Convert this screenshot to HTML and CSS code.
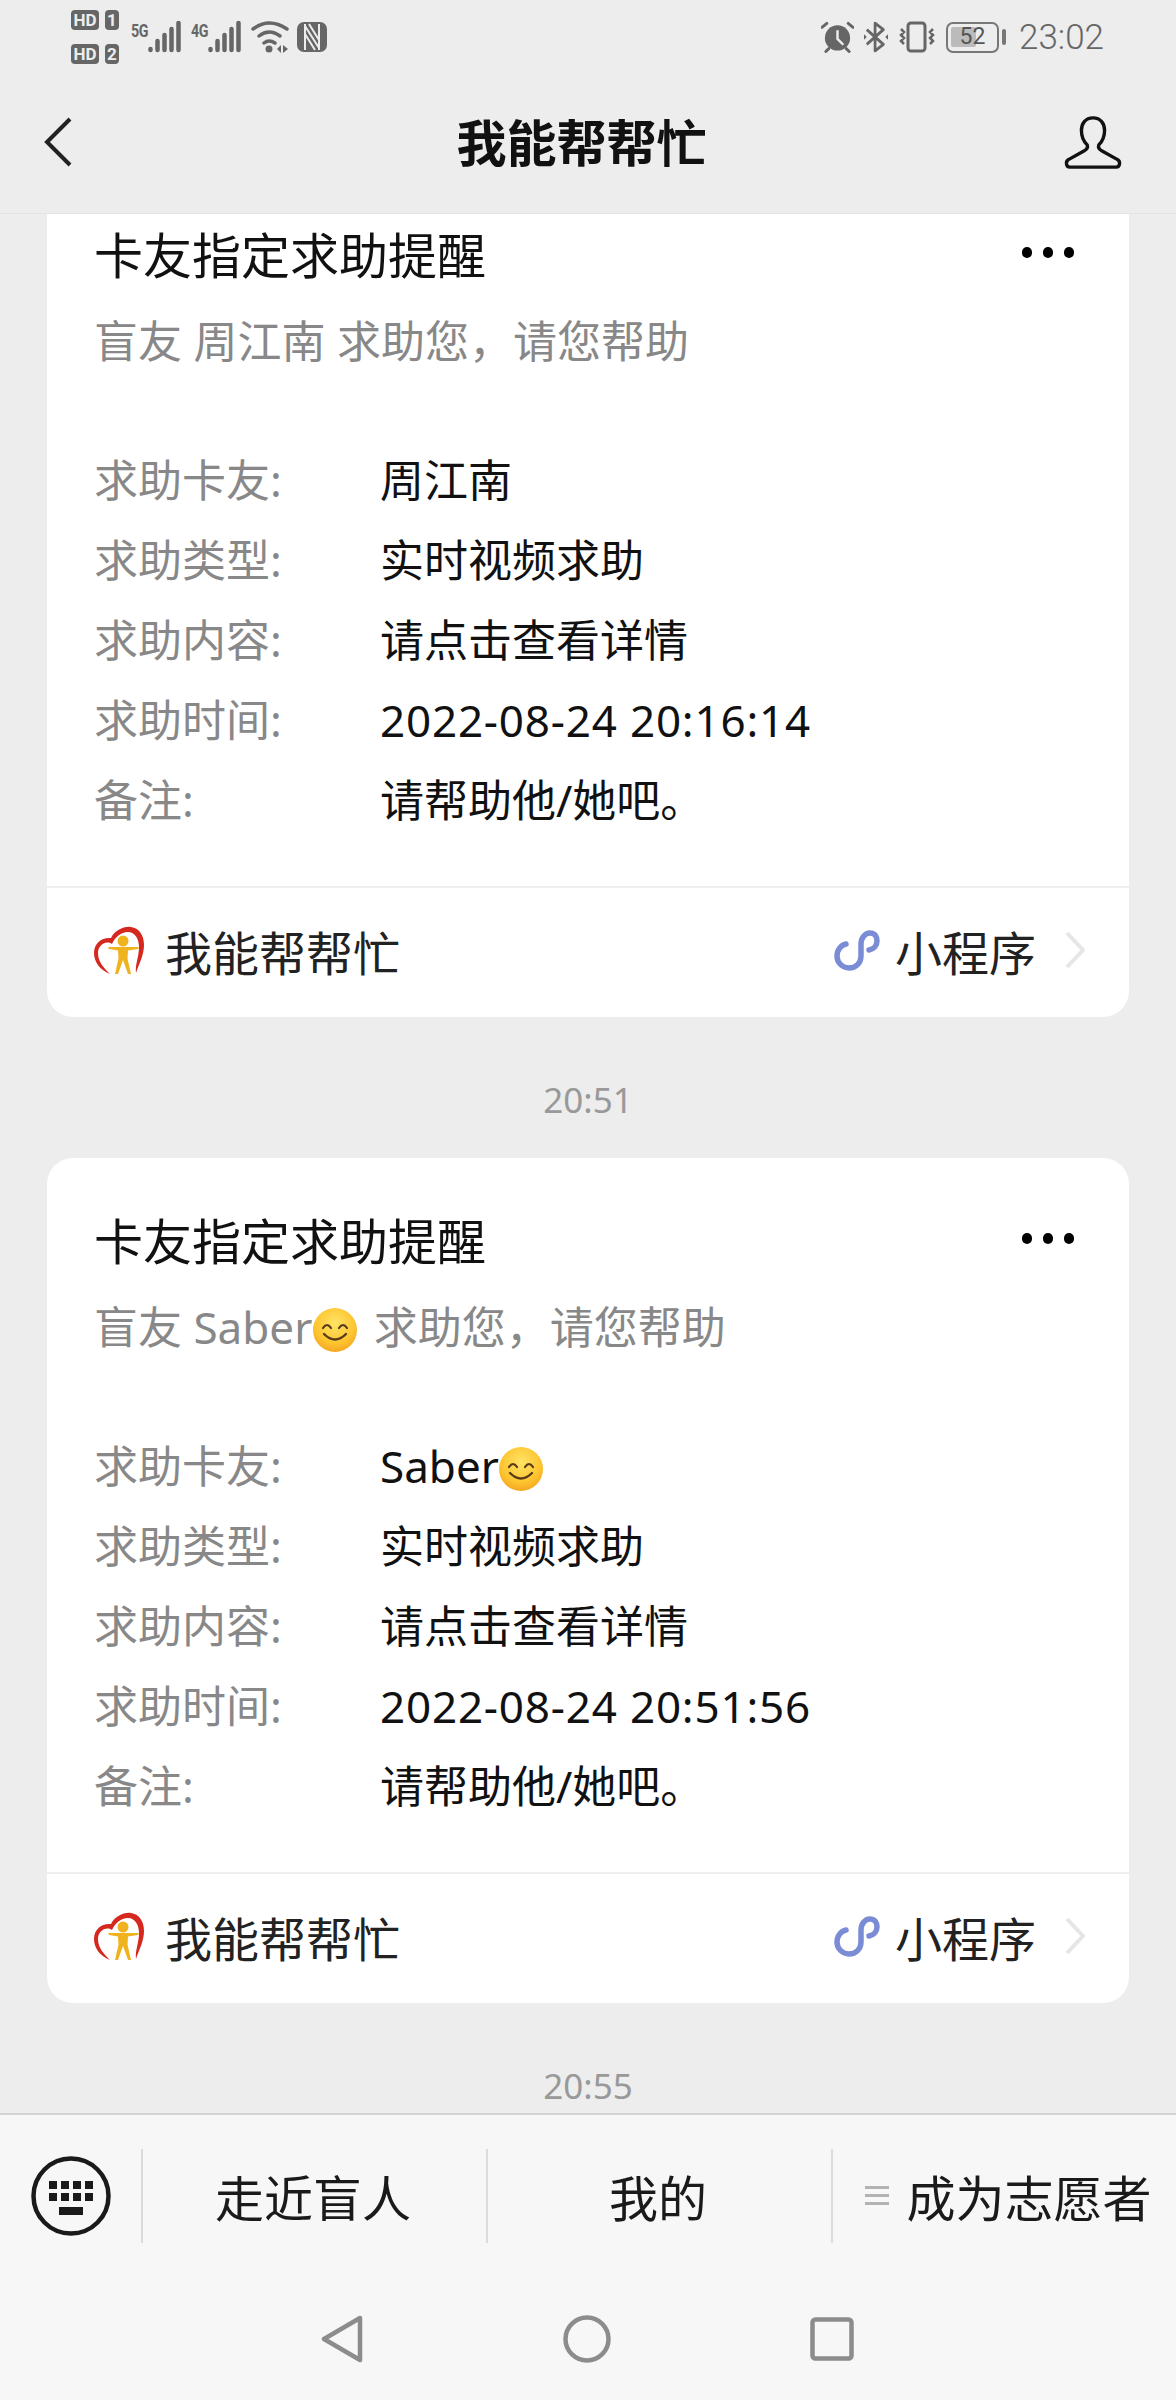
FILE: index.html
```html
<!DOCTYPE html>
<html lang="en">

<head>
    <meta charset="UTF-8">
    <meta name="viewport" content="width=device-width, initial-scale=1.0">
    <title>我能帮帮忙</title>
    <link rel="stylesheet" href="styles.css">
</head>

<body>

    <svg class="defs" width="0" height="0">
        <defs>
            <radialGradient id="emojiFace" cx="50%" cy="35%" r="70%">
                <stop offset="0" stop-color="#ffe466"/>
                <stop offset="0.65" stop-color="#fdc42f"/>
                <stop offset="1" stop-color="#f4a020"/>
            </radialGradient>
            <symbol id="smile" viewBox="0 0 44 46">
                <circle cx="22" cy="23" r="22" fill="url(#emojiFace)"/>
                <path d="M10 21q4-6 8 0M26 21q4-6 8 0" fill="none" stroke="#5b3a1a" stroke-width="2.200" stroke-linecap="round"/>
                <path d="M11 27q11 11 22 0" fill="none" stroke="#5b3a1a" stroke-width="2.400" stroke-linecap="round"/>
            </symbol>
            <symbol id="logo" viewBox="0 0 50 48">
                <path d="M16 48C6 44 0 36 0 27 0 17 8 11 17 12 21 4 30 0 37 1c8 1 13 8 13 18 0 10-5 19-8 28-1-9 3-16 3-26 0-8-4-15-11-15-7 0-13 5-16 12C12 14 4 19 4 27c0 9 6 15 12 21z" fill="#d5281f"/>
                <circle cx="29" cy="15" r="5.500" fill="#efb320"/>
                <path d="M14 21h31l-1 2-10 1.500-.5 8L37 48h-3l-5-14-5 14h-3l3.500-15.500-.5-8L15 23z" fill="#efb320"/>
            </symbol>
            <symbol id="mini" viewBox="0 0 46 42">
                <path d="M12 15c-5 1-9 6-9 12 0 7 6 12 12 12 7 0 12-5 12-12V15c0-6 4-11 9-11s7 4 7 8c0 4-3 8-8 9" fill="none" stroke="#7b8cd6" stroke-width="5.500" stroke-linecap="round"/>
            </symbol>
            <symbol id="bars" viewBox="0 0 34 32">
                <path d="M2.500 28v1M9.500 20v9M16.500 14v15M23.500 8v21M30.500 2v27" stroke="#666" stroke-width="4.500" stroke-linecap="round" fill="none"/>
            </symbol>
        </defs>
    </svg>

    <div class="page">

        <div class="top">
            <div class="status">
                <div class="status-left">
                    <div class="sims">
                        <div class="sim"><span class="hd">HD</span><span class="slot">1</span></div>
                        <div class="sim"><span class="hd">HD</span><span class="slot">2</span></div>
                    </div>
                    <div class="net"><span class="net-label">5G</span>
                        <svg width="34" height="32"><use href="#bars"/></svg>
                    </div>
                    <div class="net"><span class="net-label">4G</span>
                        <svg width="34" height="32"><use href="#bars"/></svg>
                    </div>
                    <svg class="wifi" width="38" height="32" viewBox="0 0 38 32">
                        <path d="M2 8Q18-4 36 8M8 15Q18 7 29 15M13 22q5-4 11 0" fill="none" stroke="#666" stroke-width="3.500" stroke-linecap="round"/>
                        <circle cx="18" cy="28" r="3.500" fill="#666"/>
                        <path d="M30 24v8l-4-4zM32 24v8l5-4z" fill="#666"/>
                    </svg>
                    <svg class="nfc" width="30" height="30" viewBox="0 0 30 30">
                        <path d="M7 0h16a7 7 0 0 1 7 7v16a7 7 0 0 1-7 7H7a7 7 0 0 1-7-7V7a7 7 0 0 1 7-7z" fill="#666"/>
                        <path d="M8 2v26M22 2v26M8 4l14 22M12 2l10 16M18 28L8 12" stroke="#ededed" stroke-width="2" fill="none"/>
                    </svg>
                </div>
                <div class="status-right">
                    <svg width="33" height="32" viewBox="0 0 34 32">
                        <circle cx="17" cy="17" r="13" fill="#666"/>
                        <path d="M17 9v9l6 6" stroke="#ededed" stroke-width="2.500" fill="none"/>
                        <path d="M1 6l5-4M33 6l-5-4M5 31l3-3M29 31l-3-3" stroke="#666" stroke-width="3" stroke-linecap="round"/>
                    </svg>
                    <svg width="24" height="34" viewBox="0 0 26 34">
                        <path d="M3 9l18 16-9 7V2l9 7L3 25" fill="none" stroke="#666" stroke-width="3" stroke-linejoin="round"/>
                        <path d="M0 14v6l3-3zM26 14v6l-3-3z" fill="#666"/>
                    </svg>
                    <svg width="38" height="32" viewBox="0 0 38 32">
                        <rect x="10" y="2" width="17" height="28" rx="3" fill="none" stroke="#666" stroke-width="3"/>
                        <path d="M3 8l3 3-3 3 3 3-3 3 3 3M35 8l-3 3 3 3-3 3 3 3-3 3" fill="none" stroke="#666" stroke-width="2.500"/>
                    </svg>
                    <div class="battery">
                        <div class="battery-box">
                            <div class="battery-fill"></div>
                            <span class="battery-num">52</span>
                        </div>
                        <div class="battery-tip"></div>
                    </div>
                    <span class="clock">23:02</span>
                </div>
            </div>
            <div class="nav">
                <svg class="nav-back" width="32" height="52" viewBox="0 0 32 52"><path d="M28 3L5 26l23 23" fill="none" stroke="#222" stroke-width="4"/></svg>
                <div class="nav-title">我能帮帮忙</div>
                <svg class="nav-user" width="58" height="54" viewBox="0 0 60 56"><path d="M30 3c-8 0-12 6-12 13 0 6 2 11 6 15 1 3-1 5-3 6L5 46c-4 2-3 8 1 8h48c4 0 5-6 1-8l-16-9c-2-1-4-3-3-6 4-4 6-9 6-15 0-7-4-13-12-13z" fill="none" stroke="#111" stroke-width="3.500" stroke-linejoin="round"/></svg>
            </div>
        </div>

        <div class="chat">
            <div class="card card-cut">
                <div class="card-head">
                    <div class="card-title">卡友指定求助提醒</div>
                    <div class="dots"><i></i><i></i><i></i></div>
                </div>
                <div class="card-sub">盲友 周江南 求助您，请您帮助</div>
                <div class="rows">
                    <div class="row"><span class="row-label">求助卡友:</span><span>周江南</span></div>
                    <div class="row"><span class="row-label">求助类型:</span><span>实时视频求助</span></div>
                    <div class="row"><span class="row-label">求助内容:</span><span>请点击查看详情</span></div>
                    <div class="row"><span class="row-label">求助时间:</span><span class="date">2022-08-24 20:16:14</span></div>
                    <div class="row"><span class="row-label">备注:</span><span>请帮助他/她吧。</span></div>
                </div>
                <div class="card-foot">
                    <svg class="foot-logo" width="50" height="48"><use href="#logo"/></svg>
                    <span class="foot-name">我能帮帮忙</span>
                    <svg class="foot-mini" width="46" height="42"><use href="#mini"/></svg>
                    <span class="foot-type">小程序</span>
                    <svg class="foot-arrow" width="20" height="38" viewBox="0 0 20 38"><path d="M2 2l16 17L2 36" fill="none" stroke="#e6e6e6" stroke-width="4"/></svg>
                </div>
            </div>

            <div class="time">20:51</div>

            <div class="card">
                <div class="card-head">
                    <div class="card-title">卡友指定求助提醒</div>
                    <div class="dots"><i></i><i></i><i></i></div>
                </div>
                <div class="card-sub">盲友 Saber<svg class="emoji emoji-sub" width="44" height="46"><use href="#smile"/></svg> 求助您，请您帮助</div>
                <div class="rows">
                    <div class="row"><span class="row-label">求助卡友:</span><span>Saber<svg class="emoji" width="44" height="46"><use href="#smile"/></svg></span></div>
                    <div class="row"><span class="row-label">求助类型:</span><span>实时视频求助</span></div>
                    <div class="row"><span class="row-label">求助内容:</span><span>请点击查看详情</span></div>
                    <div class="row"><span class="row-label">求助时间:</span><span class="date">2022-08-24 20:51:56</span></div>
                    <div class="row"><span class="row-label">备注:</span><span>请帮助他/她吧。</span></div>
                </div>
                <div class="card-foot">
                    <svg class="foot-logo" width="50" height="48"><use href="#logo"/></svg>
                    <span class="foot-name">我能帮帮忙</span>
                    <svg class="foot-mini" width="46" height="42"><use href="#mini"/></svg>
                    <span class="foot-type">小程序</span>
                    <svg class="foot-arrow" width="20" height="38" viewBox="0 0 20 38"><path d="M2 2l16 17L2 36" fill="none" stroke="#e6e6e6" stroke-width="4"/></svg>
                </div>
            </div>

            <div class="time">20:55</div>
        </div>

        <div class="bottom">
            <div class="menu">
                <div class="menu-kb">
                    <svg width="80" height="80" viewBox="0 0 80 80">
                        <circle cx="40" cy="40" r="37.500" fill="none" stroke="#1a1a1a" stroke-width="4.500"/>
                        <path d="M18 25h8v8h-8zM30 25h8v8h-8zM42 25h8v8h-8zM54 25h8v8h-8zM18 37h8v8h-8zM30 37h8v8h-8zM42 37h8v8h-8zM54 37h8v8h-8zM28 51h24v8H28z" fill="#1a1a1a"/>
                    </svg>
                </div>
                <div class="menu-item">走近盲人</div>
                <div class="menu-item">我的</div>
                <div class="menu-item menu-last">
                    <div class="menu-lines"><i></i><i></i><i></i></div>成为志愿者
                </div>
            </div>
            <div class="softkeys">
                <svg width="42" height="48" viewBox="0 0 42 48"><path d="M39 3L3 24l36 21z" fill="none" stroke="#8c8c8c" stroke-width="4.500" stroke-linejoin="round"/></svg>
                <svg width="48" height="48" viewBox="0 0 48 48"><circle cx="24" cy="24" r="21.500" fill="none" stroke="#8c8c8c" stroke-width="4.500"/></svg>
                <svg width="44" height="44" viewBox="0 0 44 44"><rect x="2.500" y="2.500" width="39" height="39" rx="3" fill="none" stroke="#8c8c8c" stroke-width="4.500"/></svg>
            </div>
        </div>

    </div>

</body>

</html>
```

FILE: styles.css
```css
* {
    box-sizing: border-box;
}

body {
    margin: 0;
    padding: 0;
    background-color: #ededed;
    font-family: "Noto Sans", "Noto Sans CJK SC", sans-serif;
    color: #111;
}

.defs {
    display: block;
    height: 0;
}

.page {
    display: flex;
    flex-direction: column;
    width: 1176px;
    height: 2400px;
    overflow: hidden;
}

/* top bars */
.top {
    flex: none;
    height: 214px;
    background-color: #ededed;
    border-bottom: 1px solid #e3e3e3;
}

.status {
    display: flex;
    justify-content: space-between;
    align-items: center;
    height: 74px;
    padding: 0 72px 0 71px;
    color: #666;
}

.status-left,
.status-right {
    display: flex;
    align-items: center;
}

.sims {
    display: flex;
    flex-direction: column;
    gap: 14px;
    margin-right: 12px;
}

.sim {
    display: flex;
    gap: 6px;
}

.hd,
.slot {
    display: block;
    height: 20px;
    background-color: #666;
    border-radius: 4px;
    color: #ededed;
    font-family: "Roboto", sans-serif;
    font-size: 17px;
    font-weight: 700;
    line-height: 20px;
    text-align: center;
}

.hd {
    width: 28px;
}

.slot {
    width: 14px;
}

.net {
    display: flex;
    align-items: flex-end;
    margin-right: 9px;
}

.net-label {
    align-self: flex-start;
    width: 17px;
    margin-top: 1px;
    font-family: "Roboto", sans-serif;
    font-size: 19px;
    font-weight: 700;
    letter-spacing: -.5px;
    line-height: 18px;
    white-space: nowrap;
    transform: scaleX(.75);
    transform-origin: left center;
}

.wifi {
    margin-right: 8px;
}

.status-right {
    gap: 10px;
}

.battery {
    display: flex;
    align-items: center;
    gap: 3px;
}

.battery-box {
    position: relative;
    width: 53px;
    height: 31px;
    border: 2.500px solid #777;
    border-radius: 7px;
}

.battery-fill {
    width: 25px;
    height: 20px;
    margin: 3px;
    background-color: #bbb;
    border-radius: 2px;
}

.battery-num {
    position: absolute;
    left: 0;
    right: 0;
    top: 0;
    color: #555;
    font-family: "Roboto", sans-serif;
    font-size: 23px;
    line-height: 26px;
    text-align: center;
}

.battery-tip {
    width: 4px;
    height: 16px;
    background-color: #777;
    border-radius: 2px;
}

.clock {
    margin-left: 3px;
    font-family: "Roboto", sans-serif;
    font-size: 35px;
    font-weight: 300;
}

.nav {
    display: flex;
    align-items: center;
    height: 139px;
    padding: 0 54px 4px 42px;
}

.nav-title {
    flex: 1;
    padding-left: 25px;
    padding-bottom: 2px;
    font-size: 50px;
    font-weight: 700;
    text-align: center;
}

/* messages */
.chat {
    flex: 1;
    min-height: 0;
    overflow: hidden;
    padding: 0 47px;
}

.card {
    height: 845px;
    padding: 53px 48px 0 47px;
    background-color: #fff;
    border-radius: 26px;
}

.card-cut {
    margin-top: -42px;
}

.card-head {
    display: flex;
    justify-content: space-between;
    align-items: center;
}

.card-title {
    font-size: 49px;
    line-height: 60px;
}

.dots {
    display: flex;
    gap: 10.500px;
    margin-right: 7px;
    margin-top: -5px;
}

.dots i {
    display: block;
    width: 10.500px;
    height: 10.500px;
    background-color: #000;
    border-radius: 50%;
}

.card-sub {
    margin-top: 26px;
    color: #888;
    font-size: 44px;
    line-height: 60px;
}

.emoji {
    vertical-align: -9px;
}

.emoji-sub {
    margin: 0 5px 0 1px;
}

.rows {
    margin-top: 69px;
}

.row {
    display: flex;
    font-size: 44px;
    line-height: 80px;
    height: 80px;
}

.row-label {
    width: 286px;
    color: #888;
}

.date {
    letter-spacing: .8px;
}

.card-foot {
    display: flex;
    align-items: center;
    height: 130px;
    margin: 46px -48px 0 -47px;
    padding: 0 44px 4px 47px;
    border-top: 2px solid #eee;
}

.foot-logo {
    flex: none;
}

.foot-name {
    flex: 1;
    margin-left: 21px;
    font-size: 47px;
    color: #222;
}

.foot-mini {
    flex: none;
}

.foot-type {
    margin-left: 15px;
    margin-right: 29px;
    font-size: 47px;
    color: #222;
}

.time {
    height: 141px;
    color: #999;
    font-size: 35px;
    line-height: 166px;
    text-align: center;
}

/* bottom menu */
.bottom {
    flex: none;
    height: 287px;
    background-color: #f7f7f7;
    border-top: 2px solid #d4d4d4;
}

.menu {
    display: flex;
    height: 94px;
    margin-top: 34px;
}

.menu-kb {
    display: flex;
    flex: none;
    align-items: center;
    justify-content: center;
    width: 141px;
}

.menu-item {
    display: flex;
    flex: 1;
    align-items: center;
    justify-content: center;
    padding-right: 3px;
    padding-bottom: 2px;
    border-left: 2px solid #dcdcdc;
    color: #1a1a1a;
    font-size: 49px;
}

.menu-last {
    flex: none;
    width: 345px;
    gap: 17px;
    padding-left: 8px;
    padding-right: 0;
}

.menu-lines {
    display: flex;
    flex-direction: column;
    gap: 5px;
}

.menu-lines i {
    display: block;
    width: 24px;
    height: 3px;
    background-color: #b3b3b3;
}

.softkeys {
    display: grid;
    grid-template-columns: 42px 48px 44px;
    justify-content: space-between;
    align-items: center;
    margin-top: 72px;
    padding: 0 322px 0 321px;
}
```
